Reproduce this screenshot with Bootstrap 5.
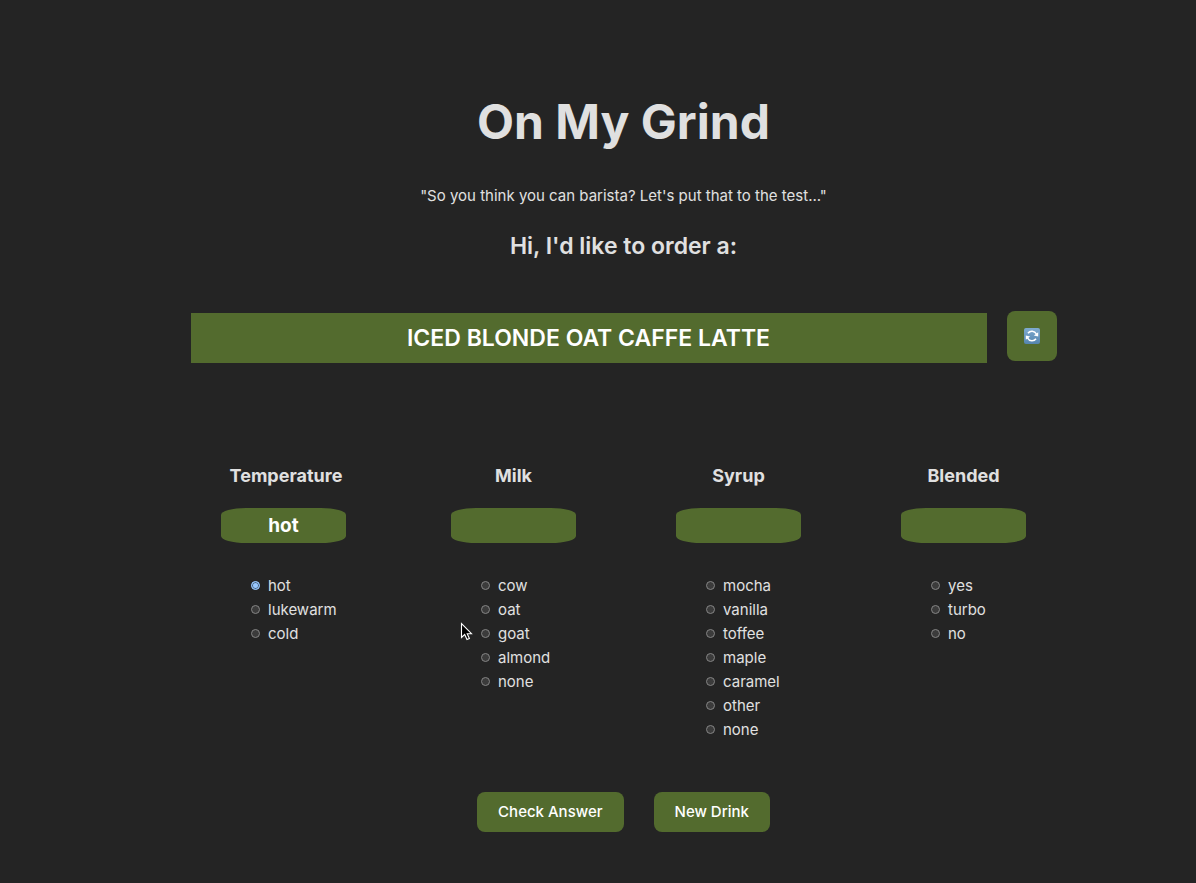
<!DOCTYPE html>
<html lang="en" data-bs-theme="dark">
<head>
<meta charset="utf-8">
<meta name="viewport" content="width=device-width, initial-scale=1">
<title>On My Grind</title>
<link rel="stylesheet" href="https://cdn.jsdelivr.net/npm/bootstrap@5.3.0/dist/css/bootstrap.min.css">
<style>
:root { --olive: #536b2e; --ink: #e0e0e0; --ground: #242424; }
body {
  font-family: Inter, "Liberation Sans", sans-serif;
  font-size: 15px;
  line-height: 24px;
  color: var(--ink);
  background: var(--ground);
  border-bottom: 1px solid #111;
}
main { padding: 94px 0 51px 51px; }
h1, h2, h3 { color: var(--ink); }
h1 { font-size: 48px; line-height: 56px; font-weight: 700; margin-bottom: 34px; }
h2 { font-size: 23px; line-height: 36px; font-weight: 600; margin: 20px 0 47px; }
h3 { font-size: 18px; line-height: 24px; font-weight: 700; margin-bottom: 20px; text-align: center; }
.order-line { max-width: 866px; gap: 20px; margin-bottom: 100px; }
.order-name {
  background: var(--olive);
  color: #fff;
  font-size: 23px;
  line-height: 50px;
  font-weight: 600;
}
.btn-olive {
  --bs-btn-color: #fff;
  --bs-btn-bg: var(--olive);
  --bs-btn-hover-color: #fff;
  --bs-btn-hover-bg: #607b36;
  --bs-btn-active-bg: #465a27;
  --bs-btn-border-radius: 8px;
  --bs-btn-border-width: 0;
  --bs-btn-padding-x: 21px;
  --bs-btn-padding-y: 8px;
  --bs-btn-font-size: 15px;
  --bs-btn-line-height: 24px;
  --bs-btn-font-weight: 500;
}
.btn-renew { --bs-btn-padding-x: 0; width: 50px; height: 50px; margin-bottom: 3px; }
.choices { gap: 30px 100px; margin-bottom: 50px; }
.choice { width: 125px; }
.choice-wide { width: 130px; }
.picked {
  width: 125px;
  height: 35px;
  margin-bottom: 31px;
  border-radius: 20%;
  background: var(--olive);
  color: #fff;
  font-size: 19px;
  line-height: 35px;
  font-weight: 700;
}
.option-list { padding-left: 30px; }
.option-list input {
  appearance: none;
  flex: none;
  width: 9px;
  height: 9px;
  margin: 0 8px 2px 0;
  border: 1px solid #858585;
  border-radius: 50%;
  background: #3b3b3b;
}
.option-list input:checked {
  border-color: #99c8ff;
  background: #99c8ff;
  box-shadow: inset 0 0 0 1px #4a6580;
}
.actions { gap: 30px; }
.pointer { position: absolute; right: 100%; top: 0; margin-right: 7px; }
</style>
</head>
<body>
<main class="text-center">
  <h1>On My Grind</h1>
  <p class="mb-0">"So you think you can barista? Let's put that to the test..."</p>
  <h2>Hi, I'd like to order a:</h2>

  <div class="order-line d-flex align-items-center mx-auto">
    <div class="order-name flex-grow-1">ICED BLONDE OAT CAFFE LATTE</div>
    <button type="button" class="btn btn-olive btn-renew d-flex align-items-center justify-content-center" aria-label="Another order">
      <svg width="16" height="16" viewBox="0 0 16 16" aria-hidden="true">
        <defs><linearGradient id="tile" x1="0" y1="0" x2="0" y2="1"><stop offset="0" stop-color="#7fabd0"/><stop offset="1" stop-color="#5585ae"/></linearGradient></defs>
        <rect width="16" height="16" rx="2" fill="url(#tile)"/>
        <g fill="none" stroke="#fff" stroke-width="1.6"><path d="M4 5.2C6 2.4 10.6 2.4 12.4 6"/><path d="M12 10.8C10 13.6 5.4 13.6 3.6 10"/></g>
        <path d="M14.2 4.2v4.4L9.8 7.4zM1.8 11.8V7.4l4.4 1.2z" fill="#fff"/>
      </svg>
    </button>
  </div>

  <form>
    <div class="choices d-flex flex-wrap justify-content-center">
      <section class="choice choice-wide">
        <h3>Temperature</h3>
        <div class="picked">hot</div>
        <div class="option-list">
          <label class="d-flex align-items-center"><input type="radio" name="temperature" checked>hot</label>
          <label class="d-flex align-items-center"><input type="radio" name="temperature">lukewarm</label>
          <label class="d-flex align-items-center"><input type="radio" name="temperature">cold</label>
        </div>
      </section>
      <section class="choice">
        <h3>Milk</h3>
        <div class="picked"></div>
        <div class="option-list">
          <label class="d-flex align-items-center"><input type="radio" name="milk">cow</label>
          <label class="d-flex align-items-center"><input type="radio" name="milk">oat</label>
          <label class="d-flex align-items-center position-relative"><input type="radio" name="milk">goat
            <svg class="pointer" width="14" height="20" viewBox="0 0 14 20" aria-hidden="true"><path d="M1.5 1.5v14l3.2-3 2.3 5 2.4-1-2.2-4.8h4.3z" fill="#000" stroke="#fff" stroke-width="1.1"/></svg>
          </label>
          <label class="d-flex align-items-center"><input type="radio" name="milk">almond</label>
          <label class="d-flex align-items-center"><input type="radio" name="milk">none</label>
        </div>
      </section>
      <section class="choice">
        <h3>Syrup</h3>
        <div class="picked"></div>
        <div class="option-list">
          <label class="d-flex align-items-center"><input type="radio" name="syrup">mocha</label>
          <label class="d-flex align-items-center"><input type="radio" name="syrup">vanilla</label>
          <label class="d-flex align-items-center"><input type="radio" name="syrup">toffee</label>
          <label class="d-flex align-items-center"><input type="radio" name="syrup">maple</label>
          <label class="d-flex align-items-center"><input type="radio" name="syrup">caramel</label>
          <label class="d-flex align-items-center"><input type="radio" name="syrup">other</label>
          <label class="d-flex align-items-center"><input type="radio" name="syrup">none</label>
        </div>
      </section>
      <section class="choice">
        <h3>Blended</h3>
        <div class="picked"></div>
        <div class="option-list">
          <label class="d-flex align-items-center"><input type="radio" name="blended">yes</label>
          <label class="d-flex align-items-center"><input type="radio" name="blended">turbo</label>
          <label class="d-flex align-items-center"><input type="radio" name="blended">no</label>
        </div>
      </section>
    </div>
    <div class="actions d-flex flex-wrap justify-content-center">
      <button type="button" class="btn btn-olive">Check Answer</button>
      <button type="button" class="btn btn-olive">New Drink</button>
    </div>
  </form>
</main>
<script src="https://cdn.jsdelivr.net/npm/bootstrap@5.3.0/dist/js/bootstrap.bundle.min.js"></script>
</body>
</html>
